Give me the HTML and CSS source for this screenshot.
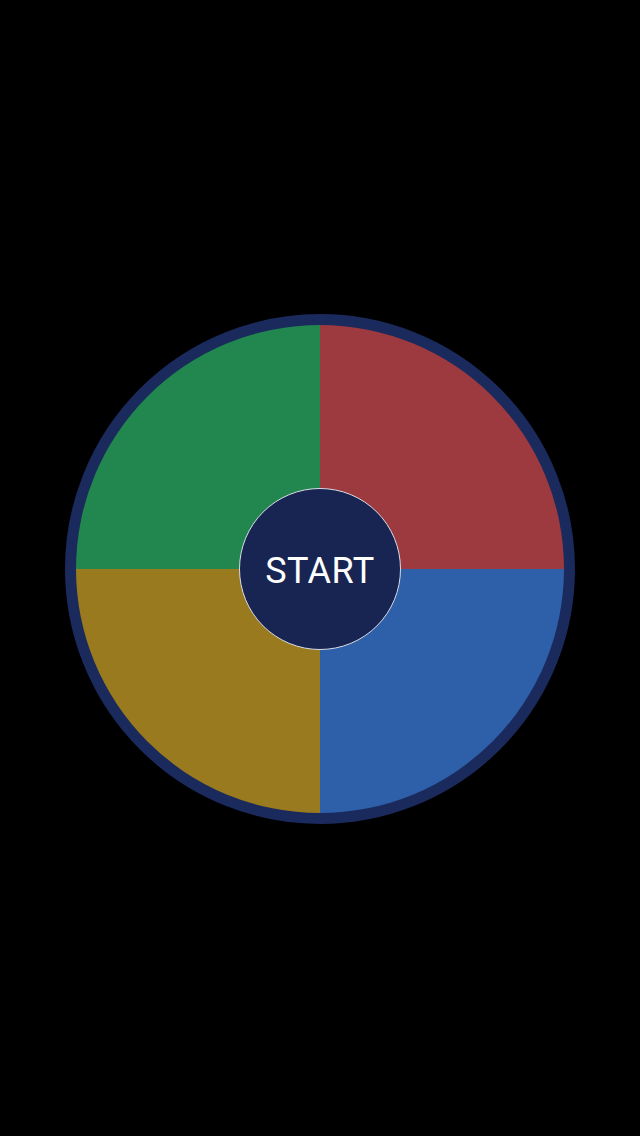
FILE: index.html
```html
<!DOCTYPE html>
<html>
<head>
<meta charset="utf-8">
<link rel="stylesheet" href="styles.css">
</head>
<body>
<main class="screen">
  <div class="wheel">
    <div class="pad pad-green"></div>
    <div class="pad pad-red"></div>
    <div class="pad pad-yellow"></div>
    <div class="pad pad-blue"></div>
    <button class="start">START</button>
  </div>
</main>
</body>
</html>
```
FILE: styles.css
```css
html, body {
  margin: 0;
  padding: 0;
  background: #000;
}
.screen {
  width: 640px;
  height: 1136px;
  display: flex;
  align-items: center;
  justify-content: center;
  padding-top: 2px;
  box-sizing: border-box;
}
.wheel {
  position: relative;
  width: 510px;
  height: 510px;
  box-sizing: border-box;
  border: 11px solid #1b2a5c;
  border-radius: 50%;
  overflow: hidden;
  display: grid;
  grid-template-columns: 1fr 1fr;
  grid-template-rows: 1fr 1fr;
  background: #1b2a5c;
}
.pad-green { background: #21874f; }
.pad-red { background: #9c3a40; }
.pad-yellow { background: #9a7a1e; }
.pad-blue { background: #2e5fa9; }
.start {
  position: absolute;
  left: 50%;
  top: 50%;
  width: 162px;
  height: 162px;
  margin: -81px 0 0 -81px;
  border-radius: 50%;
  border: 1.5px solid #d8dbe4;
  background: #182553;
  color: #fff;
  font-family: Roboto, "Liberation Sans", sans-serif;
  font-size: 36px;
  font-weight: 400;
  letter-spacing: 0.5px;
  padding: 3px 0 0 0;
  cursor: pointer;
}
```
